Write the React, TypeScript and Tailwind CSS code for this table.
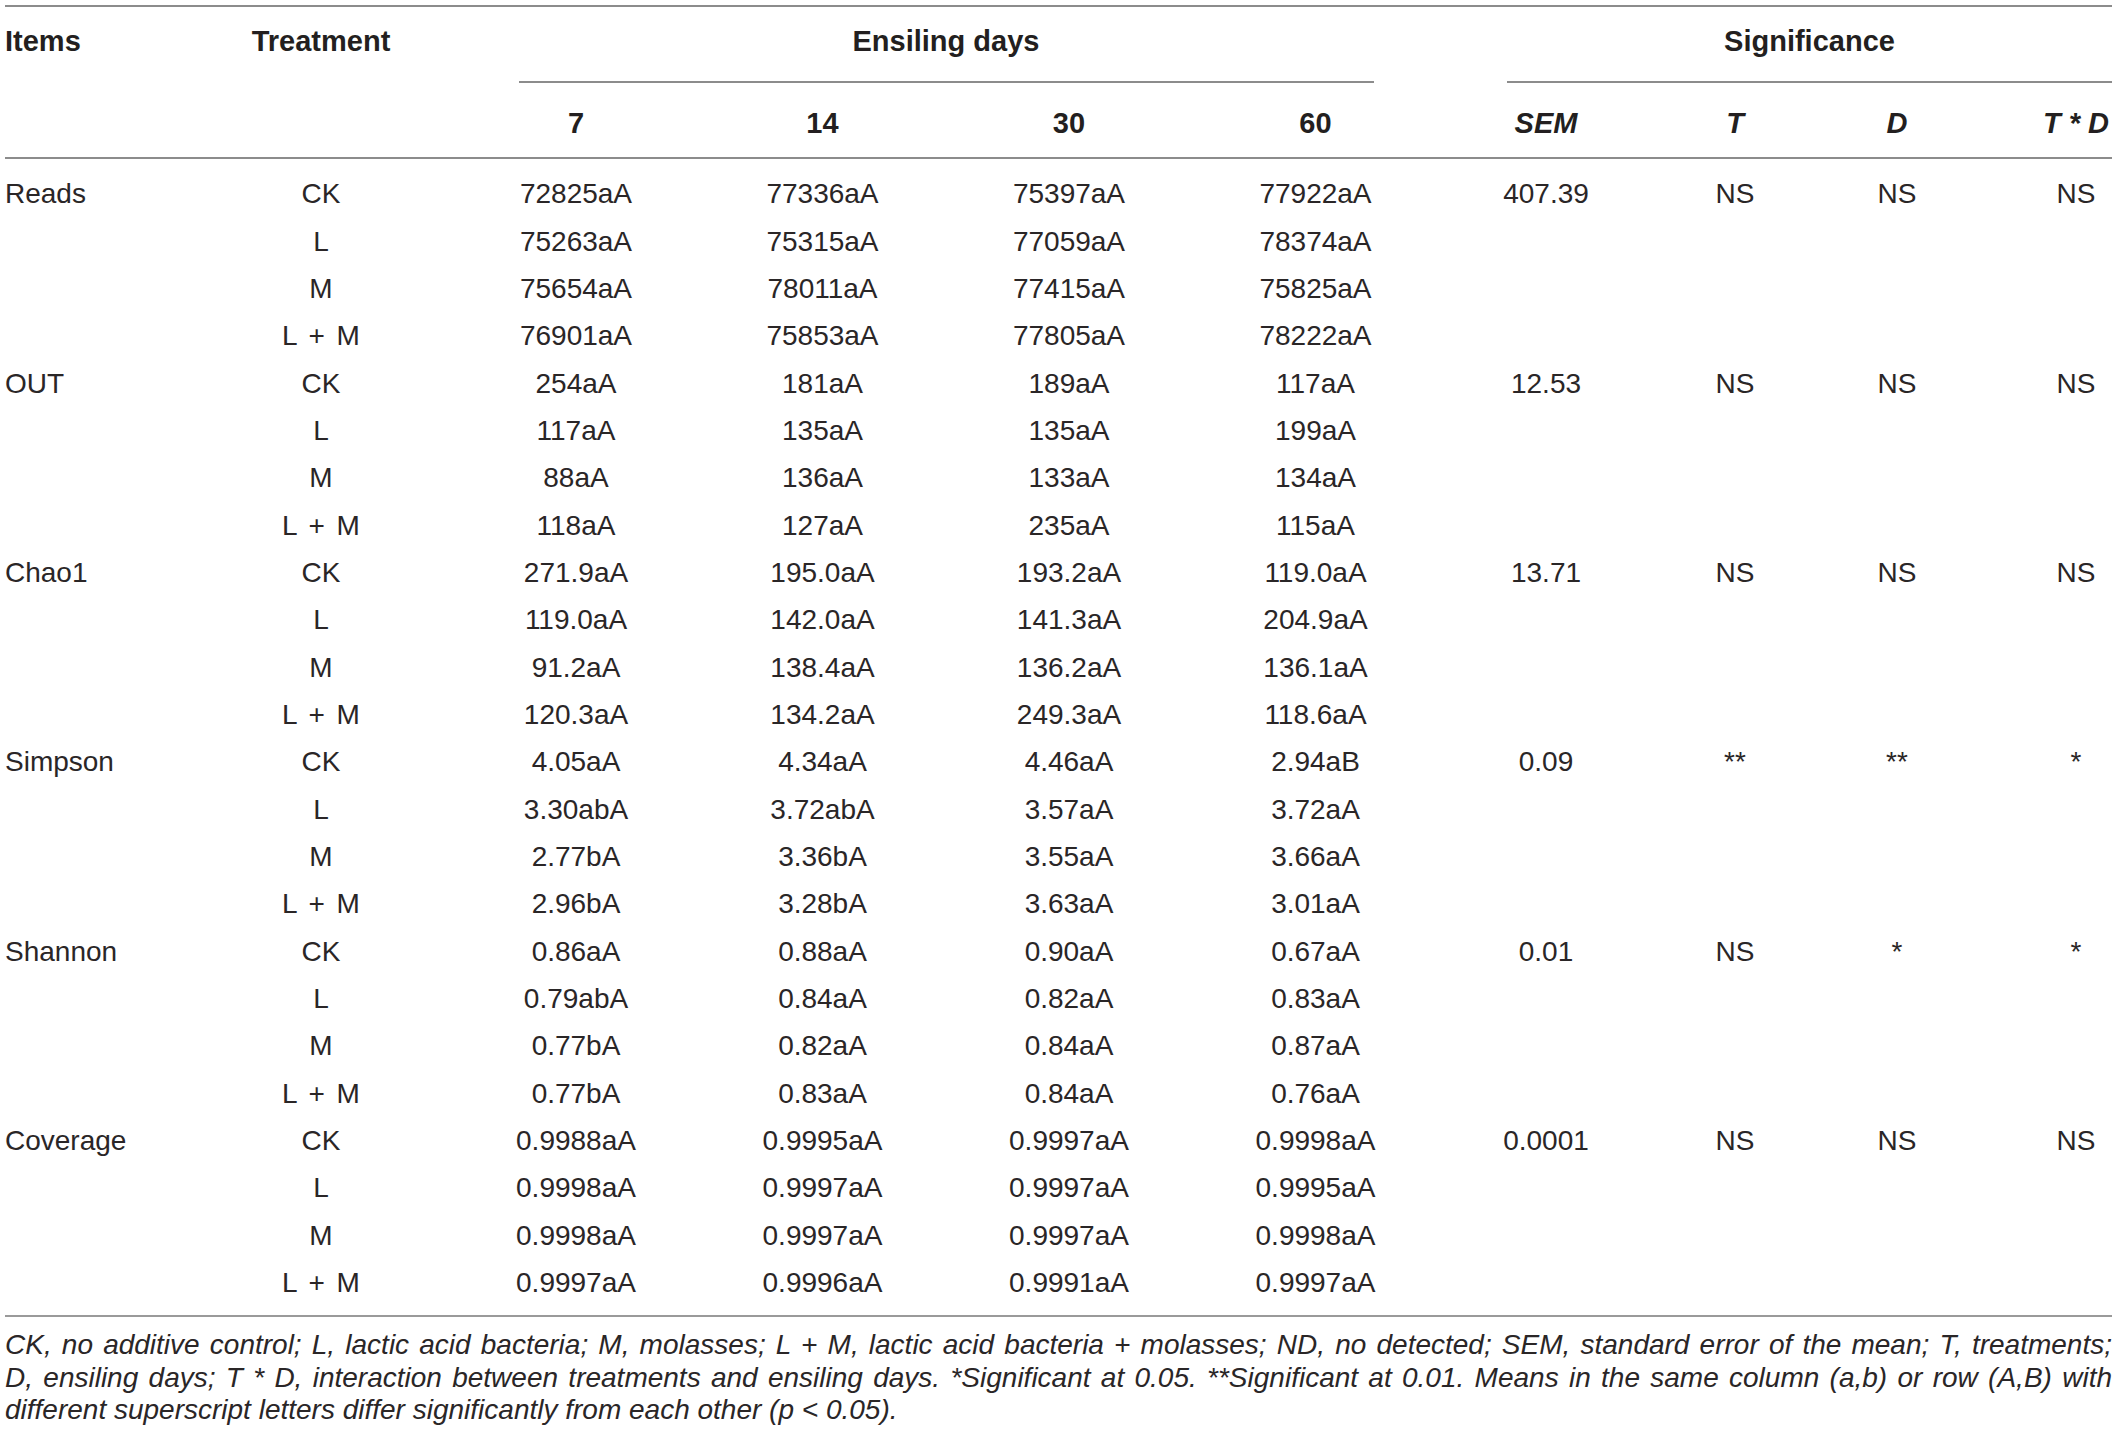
import React from "react";

const cols =
  "grid grid-cols-[184px_264px_246px_247px_246px_247px_214px_164px_160px_63px_72px]";

type Row = {
  item?: string;
  treatment: string;
  values: string[];
  sig?: string[];
};

const groups: { item: string; rows: string[][]; sig: string[] }[] = [
  {
    item: "Reads",
    sig: ["407.39", "NS", "NS", "NS"],
    rows: [
      ["CK", "72825aA", "77336aA", "75397aA", "77922aA"],
      ["L", "75263aA", "75315aA", "77059aA", "78374aA"],
      ["M", "75654aA", "78011aA", "77415aA", "75825aA"],
      ["L + M", "76901aA", "75853aA", "77805aA", "78222aA"],
    ],
  },
  {
    item: "OUT",
    sig: ["12.53", "NS", "NS", "NS"],
    rows: [
      ["CK", "254aA", "181aA", "189aA", "117aA"],
      ["L", "117aA", "135aA", "135aA", "199aA"],
      ["M", "88aA", "136aA", "133aA", "134aA"],
      ["L + M", "118aA", "127aA", "235aA", "115aA"],
    ],
  },
  {
    item: "Chao1",
    sig: ["13.71", "NS", "NS", "NS"],
    rows: [
      ["CK", "271.9aA", "195.0aA", "193.2aA", "119.0aA"],
      ["L", "119.0aA", "142.0aA", "141.3aA", "204.9aA"],
      ["M", "91.2aA", "138.4aA", "136.2aA", "136.1aA"],
      ["L + M", "120.3aA", "134.2aA", "249.3aA", "118.6aA"],
    ],
  },
  {
    item: "Simpson",
    sig: ["0.09", "**", "**", "*"],
    rows: [
      ["CK", "4.05aA", "4.34aA", "4.46aA", "2.94aB"],
      ["L", "3.30abA", "3.72abA", "3.57aA", "3.72aA"],
      ["M", "2.77bA", "3.36bA", "3.55aA", "3.66aA"],
      ["L + M", "2.96bA", "3.28bA", "3.63aA", "3.01aA"],
    ],
  },
  {
    item: "Shannon",
    sig: ["0.01", "NS", "*", "*"],
    rows: [
      ["CK", "0.86aA", "0.88aA", "0.90aA", "0.67aA"],
      ["L", "0.79abA", "0.84aA", "0.82aA", "0.83aA"],
      ["M", "0.77bA", "0.82aA", "0.84aA", "0.87aA"],
      ["L + M", "0.77bA", "0.83aA", "0.84aA", "0.76aA"],
    ],
  },
  {
    item: "Coverage",
    sig: ["0.0001", "NS", "NS", "NS"],
    rows: [
      ["CK", "0.9988aA", "0.9995aA", "0.9997aA", "0.9998aA"],
      ["L", "0.9998aA", "0.9997aA", "0.9997aA", "0.9995aA"],
      ["M", "0.9998aA", "0.9997aA", "0.9997aA", "0.9998aA"],
      ["L + M", "0.9997aA", "0.9996aA", "0.9991aA", "0.9997aA"],
    ],
  },
];

const rows: Row[] = groups.flatMap((g) =>
  g.rows.map((r, i) => ({
    item: i === 0 ? g.item : undefined,
    treatment: r[0],
    values: r.slice(1),
    sig: i === 0 ? g.sig : undefined,
  }))
);

function DataRow({ row }: { row: Row }) {
  const sig = row.sig ?? ["", "", "", ""];
  return (
    <div className={`${cols} h-[47.35px] items-center`}>
      <div className="text-left">{row.item}</div>
      <div className="text-center [word-spacing:4px]">{row.treatment}</div>
      {row.values.map((v, i) => (
        <div key={i} className="text-center">
          {v}
        </div>
      ))}
      <div className="text-center">{sig[0]}</div>
      <div className="text-center">{sig[1]}</div>
      <div className="text-center">{sig[2]}</div>
      <div />
      <div className="text-center">{sig[3]}</div>
    </div>
  );
}

export default function App() {
  return (
    <div className="min-h-screen bg-white px-[5px] pt-[5px] font-['Liberation_Sans',Arial,sans-serif] text-[28px] text-[#2a2627]">
      <div className="w-[2107px]">
        {/* top rule */}
        <div className="h-[2px] bg-[#8c8c8c]" />

        {/* header row 1 */}
        <div className={`${cols} text-[29px] font-bold leading-[34px] text-[#231f20]`}>
          <div className="pt-[17px]">Items</div>
          <div className="pt-[17px] text-center">Treatment</div>
          <div className="col-span-4 pt-[17px]">
            <div className="text-center">Ensiling days</div>
            <div className="ml-[66px] mr-[65px] mt-[23px] h-[2px] bg-[#8c8c8c]" />
          </div>
          <div className="col-span-5 pt-[17px]">
            <div className="pl-[68px] text-center">Significance</div>
            <div className="ml-[68px] mt-[23px] h-[2px] bg-[#8c8c8c]" />
          </div>
        </div>

        {/* header row 2 */}
        <div className={`${cols} pb-[17px] pt-[23px] text-[29px] font-bold leading-[34px] text-[#231f20]`}>
          <div />
          <div />
          <div className="text-center">7</div>
          <div className="text-center">14</div>
          <div className="text-center">30</div>
          <div className="text-center">60</div>
          <div className="text-center italic">SEM</div>
          <div className="text-center italic">T</div>
          <div className="text-center italic">D</div>
          <div />
          <div className="text-center italic">T * D</div>
        </div>
        <div className="h-[2px] bg-[#8c8c8c]" />

        {/* body */}
        <div className="pb-[8.5px] pt-[11.5px]">
          {rows.map((r, i) => (
            <DataRow key={i} row={r} />
          ))}
        </div>
        <div className="h-[2px] bg-[#9a9a9a]" />

        {/* footnote */}
        <div className="pt-[12px] text-[28px] italic leading-[32.5px]">
          <p className="text-justify [text-align-last:justify]">
            CK, no additive control; L, lactic acid bacteria; M, molasses; L + M, lactic acid bacteria +
            molasses; ND, no detected; SEM, standard error of the mean; T, treatments;
          </p>
          <p className="text-justify [text-align-last:justify]">
            D, ensiling days; T * D, interaction between treatments and ensiling days. *Significant at
            0.05. **Significant at 0.01. Means in the same column (a,b) or row (A,B) with
          </p>
          <p>different superscript letters differ significantly from each other (p &lt; 0.05).</p>
        </div>
      </div>
    </div>
  );
}
